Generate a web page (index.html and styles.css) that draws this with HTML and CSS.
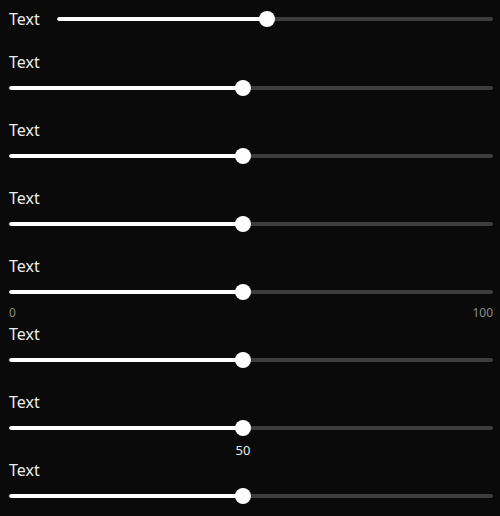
FILE: index.html
```html
<!DOCTYPE html>
<html>
<head>
<meta charset="utf-8">
<link rel="stylesheet" href="styles.css">
</head>
<body>
<div class="panel">
  <div class="row-inline">
    <span class="label inline-label">Text</span>
    <div class="slider" style="--v:0.5"><div class="track"><div class="fill"></div></div><div class="thumb"></div></div>
  </div>
  <div class="row">
    <span class="label">Text</span>
    <div class="slider" style="--v:0.5"><div class="track"><div class="fill"></div></div><div class="thumb"></div></div>
  </div>
  <div class="row">
    <span class="label">Text</span>
    <div class="slider" style="--v:0.5"><div class="track"><div class="fill"></div></div><div class="thumb"></div></div>
  </div>
  <div class="row">
    <span class="label">Text</span>
    <div class="slider" style="--v:0.5"><div class="track"><div class="fill"></div></div><div class="thumb"></div></div>
  </div>
  <div class="row">
    <span class="label">Text</span>
    <div class="slider" style="--v:0.5"><div class="track"><div class="fill"></div></div><div class="thumb"></div>
      <div class="minmax"><span>0</span><span>100</span></div>
    </div>
  </div>
  <div class="row">
    <span class="label">Text</span>
    <div class="slider" style="--v:0.5"><div class="track"><div class="fill"></div></div><div class="thumb"></div></div>
  </div>
  <div class="row">
    <span class="label">Text</span>
    <div class="slider" style="--v:0.5"><div class="track"><div class="fill"></div></div><div class="thumb"></div>
      <div class="value">50</div>
    </div>
  </div>
  <div class="row">
    <span class="label">Text</span>
    <div class="slider" style="--v:0.5"><div class="track"><div class="fill"></div></div><div class="thumb"></div></div>
  </div>
</div>
</body>
</html>
```
FILE: styles.css
```css
html, body {
  margin: 0;
  padding: 0;
  background: #0a0a0a;
  height: 100%;
}
body {
  font-family: "Noto Sans", "DejaVu Sans", sans-serif;
  color: #ececec;
}
.panel {
  display: flex;
  flex-direction: column;
  gap: 21px;
  padding: 9px 7px 0 9px;
}
.row-inline {
  display: flex;
  align-items: center;
  height: 20px;
  margin-bottom: 1px;
}
.inline-label {
  flex: 0 0 48px;
  line-height: 20px;
}
.row {
  display: flex;
  flex-direction: column;
  gap: 5px;
}
.label {
  font-size: 16px;
  line-height: 22px;
}
.slider {
  position: relative;
  flex: 1;
  height: 20px;
  display: flex;
  align-items: center;
}
.row .slider {
  flex: none;
}
.track {
  flex: 1;
  height: 4px;
  border-radius: 2px;
  background: #3d3d3d;
  overflow: hidden;
}
.fill {
  height: 100%;
  width: calc((100% - 16px) * var(--v));
  background: #ffffff;
  border-radius: 2px;
}
.thumb {
  position: absolute;
  top: 2px;
  left: calc((100% - 16px) * var(--v) - 8px);
  width: 16px;
  height: 16px;
  border-radius: 50%;
  background: #ffffff;
}
.minmax {
  position: absolute;
  left: 0;
  right: 0;
  top: calc(100% + 3px);
  display: flex;
  justify-content: space-between;
  font-size: 12px;
  line-height: 16px;
  color: #8a8a8a;
}
.value {
  position: absolute;
  top: calc(100% + 2px);
  left: calc((100% - 16px) * var(--v) - 20px);
  width: 40px;
  text-align: center;
  font-size: 13px;
  line-height: 20px;
  color: #ececec;
}
```
